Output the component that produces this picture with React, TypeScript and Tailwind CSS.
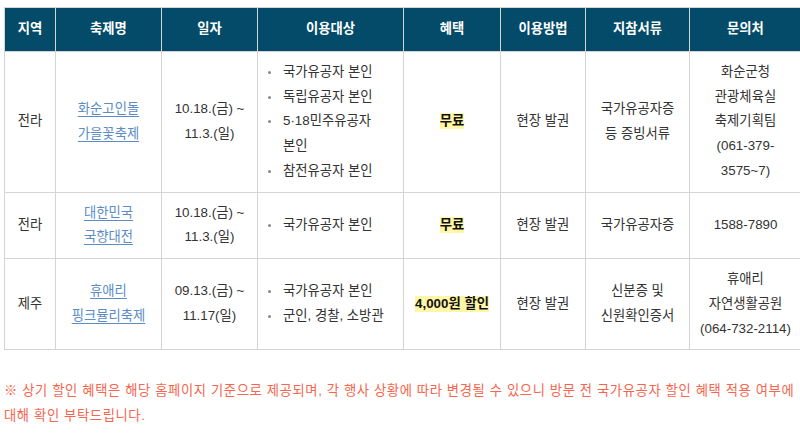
const font = { fontFamily: '"Liberation Sans", "Noto Sans CJK KR", sans-serif' };

type Row = {
  region: string;
  name: string[];
  date: string[];
  targets: string[];
  benefit: string;
  method: string;
  docs: string;
  contact: string;
};

const rows: Row[] = [
  {
    region: "전라",
    name: ["화순고인돌", "가을꽃축제"],
    date: ["10.18.(금) ~", "11.3.(일)"],
    targets: ["국가유공자 본인", "독립유공자 본인", "5·18민주유공자 본인", "참전유공자 본인"],
    benefit: "무료",
    method: "현장 발권",
    docs: "국가유공자증 등 증빙서류",
    contact: "화순군청 관광체육실 축제기획팀 (061-379-3575~7)",
  },
  {
    region: "전라",
    name: ["대한민국", "국향대전"],
    date: ["10.18.(금) ~", "11.3.(일)"],
    targets: ["국가유공자 본인"],
    benefit: "무료",
    method: "현장 발권",
    docs: "국가유공자증",
    contact: "1588-7890",
  },
  {
    region: "제주",
    name: ["휴애리", "핑크뮬리축제"],
    date: ["09.13.(금) ~", "11.17(일)"],
    targets: ["국가유공자 본인", "군인, 경찰, 소방관"],
    benefit: "4,000원 할인",
    method: "현장 발권",
    docs: "신분증 및 신원확인증서",
    contact: "휴애리 자연생활공원 (064-732-2114)",
  },
];

const headers = ["지역", "축제명", "일자", "이용대상", "혜택", "이용방법", "지참서류", "문의처"];
const widths = [51, 106, 96, 146, 97, 85, 104, 112];

const td = "border border-[#d4d4d4] px-2 py-2 text-center align-middle";

export default function App() {
  return (
    <div className="w-full overflow-hidden bg-white pl-[4px] pt-[7px] text-[13.33px] leading-[24.75px] text-[#333] break-keep" style={font}>
      <table className="w-[797px] table-fixed border-collapse">
        <colgroup>
          {widths.map((w, i) => (
            <col key={i} style={{ width: w }} />
          ))}
        </colgroup>
        <thead>
          <tr className="bg-[#034b68]">
            {headers.map((h) => (
              <th key={h} className="border border-[#d4d4d4] py-[9px] text-center font-bold text-white">
                {h}
              </th>
            ))}
          </tr>
        </thead>
        <tbody>
          {rows.map((r, i) => (
            <tr key={i}>
              <td className={td}>{r.region}</td>
              <td className={td}>
                <a href="#" className="text-[#5b8cc6] underline underline-offset-[3px]">
                  {r.name[0]}
                  <br />
                  {r.name[1]}
                </a>
              </td>
              <td className={td}>
                {r.date[0]}
                <br />
                {r.date[1]}
              </td>
              <td className="border border-[#d4d4d4] py-2 pr-2 pl-2 align-middle">
                <ul>
                  {r.targets.map((t) => (
                    <li key={t} className="flex">
                      <span className="flex w-[17px] shrink-0 pt-[11px]">
                        <span className="ml-[2px] h-[3px] w-[3px] rounded-full bg-[#888]" />
                      </span>
                      <span>{t}</span>
                    </li>
                  ))}
                </ul>
              </td>
              <td className={td}>
                <span className="inline-block bg-[#fff6a6] font-bold leading-[16px] text-[#111]">{r.benefit}</span>
              </td>
              <td className={td}>{r.method}</td>
              <td className={td}>{r.docs}</td>
              <td className={td}>{r.contact}</td>
            </tr>
          ))}
        </tbody>
      </table>
      <p className="mt-[28px] pb-[10px] leading-[25px] tracking-[0.6px] text-[#f7654e]">
        ※ 상기 할인 혜택은 해당 홈페이지 기준으로 제공되며, 각 행사 상황에 따라 변경될 수 있으니 방문 전 국가유공자 할인 혜택 적용 여부에 대해 확인 부탁드립니다.
      </p>
    </div>
  );
}
